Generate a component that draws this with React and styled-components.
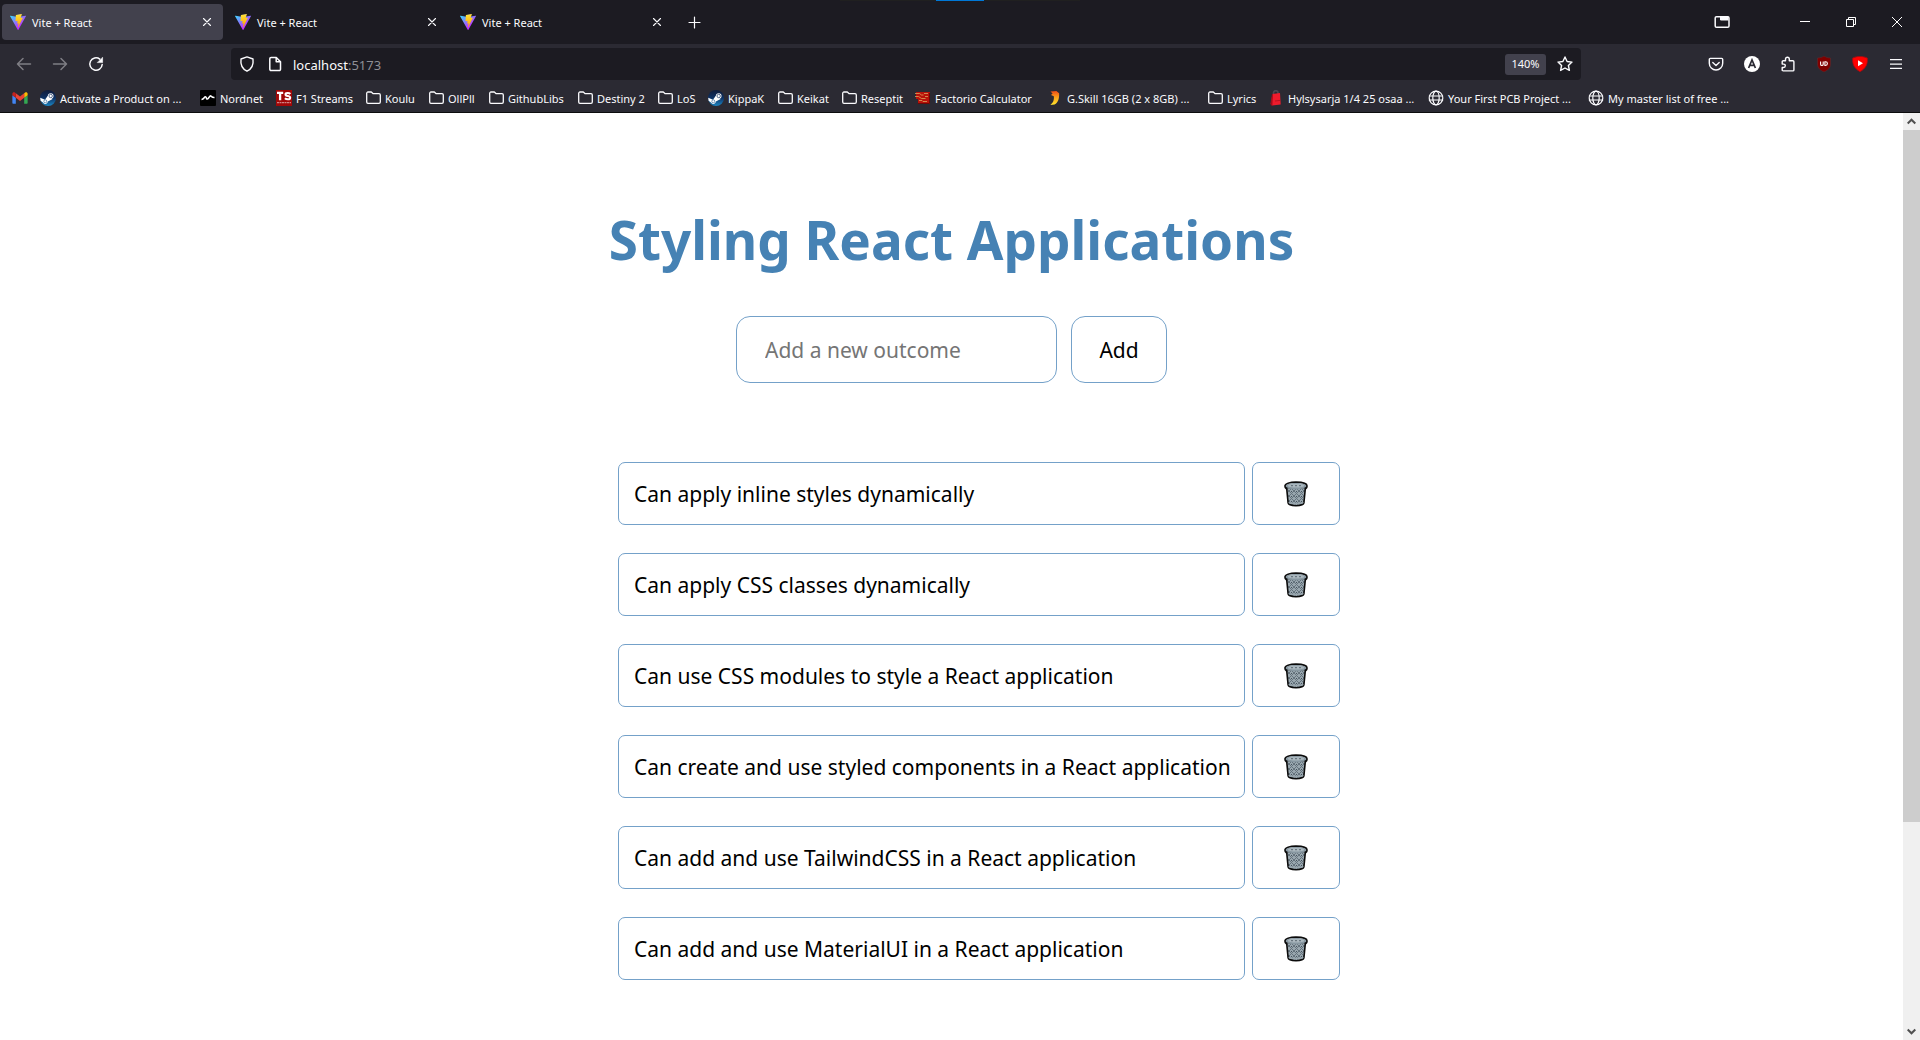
import React, { useState } from "react";
import styled, { createGlobalStyle } from "styled-components";

const GlobalStyle = createGlobalStyle`
  *, *::before, *::after { box-sizing: border-box; }
  body { margin: 0; background: #fff; }
  button, input { font: inherit; color: inherit; margin: 0; }
  svg { display: block; flex: none; }
`;

const Browser = styled.div`
  display: flex;
  flex-direction: column;
  height: 100vh;
  overflow: hidden;
  font-family: "Open Sans", "Noto Sans", sans-serif;
`;

/* ---------- browser chrome ---------- */

const Chrome = styled.header`
  position: relative;
  flex: none;
  background: #2b2a33;
  color: #fbfbfe;
  font-family: "Noto Sans", "Open Sans", sans-serif;
  font-size: 11px;
  line-height: 16px;
  border-bottom: 1px solid #0c0c0d;
`;

const TaskbarEdge = styled.div`
  position: absolute;
  top: 0;
  left: 50%;
  width: 240px;
  height: 1px;
  transform: translateX(-50%);
  display: flex;
  justify-content: center;
  background: #202020;
`;

const TaskbarMark = styled.div`
  width: 48px;
  background: #0078d7;
`;

const TabStrip = styled.div`
  display: flex;
  align-items: center;
  gap: 4px;
  height: 44px;
  padding-left: 2px;
  background: #1c1b22;
`;

const Tab = styled.div`
  display: flex;
  align-items: center;
  width: 221px;
  height: 36px;
  padding: 0 4px 0 8px;
  border-radius: 4px;
  background: ${(p) => (p.$active ? "#42414d" : "transparent")};
`;

const TabTitle = styled.span`
  flex: 1;
  margin-left: 6px;
  padding-top: 2px;
`;

const IconButton = styled.button`
  display: flex;
  align-items: center;
  justify-content: center;
  flex: none;
  width: ${(p) => p.$width || 36}px;
  height: ${(p) => p.$height || 32}px;
  padding: 0;
  border: 0;
  border-radius: 4px;
  background: transparent;
  opacity: ${(p) => (p.disabled ? 0.4 : 1)};
`;

const WindowControls = styled.div`
  display: flex;
  align-items: center;
  margin-left: auto;
`;

const WindowButtons = styled.div`
  display: flex;
  margin-left: 40px;
`;

const NavBar = styled.nav`
  display: flex;
  height: 36px;
  padding: 4px 6px 0;
`;

const AddressBar = styled.div`
  display: flex;
  align-items: center;
  flex: 1;
  height: 32px;
  margin: 0 117px;
  padding: 0 1px 0 2px;
  border-radius: 4px;
  background: #1c1b22;
`;

const Address = styled.div`
  flex: 1;
  margin-left: 4px;
  padding-top: 2px;
  font-size: 13px;
  line-height: 20px;
  outline: none;
`;

const Port = styled.span`
  color: #8f8f96;
`;

const ZoomLevel = styled.button`
  width: 41px;
  height: 21px;
  margin-right: 4px;
  padding: 0;
  border: 0;
  border-radius: 3px;
  background: #42414d;
`;

const Bookmarks = styled.div`
  display: flex;
  height: 32px;
  padding: 4px 0 0 12px;
  align-items: center;
`;

const Bookmark = styled.a`
  display: flex;
  align-items: center;
  gap: 4px;
  flex: none;
  width: ${(p) => p.$width}px;
  color: inherit;
  text-decoration: none;
  white-space: nowrap;
`;

const BookmarkLabel = styled.span`
  padding-top: 2px;
`;

/* ---------- page ---------- */

const Viewport = styled.div`
  display: flex;
  flex: 1;
  min-height: 0;
`;

const Page = styled.main`
  display: flex;
  flex-direction: column;
  align-items: center;
  flex: 1;
  padding-top: 91px;
  background: #fff;
  color: #000;
  font-family: "Noto Sans", "Open Sans", sans-serif;
  font-size: 21px;
  line-height: 30px;
  overflow: hidden;
`;

const Title = styled.h1`
  margin: 0;
  color: #4682b4;
  font-size: 53px;
  line-height: 72px;
  font-weight: 700;
`;

const OutcomeForm = styled.form`
  display: flex;
  gap: 14px;
  margin: 40px 0 79px;
`;

const OutcomeInput = styled.input`
  width: 321px;
  height: 67px;
  padding: 0 28px;
  border: 1px solid #74a1c9;
  border-radius: 14px;
  background: #fff;
  outline: none;

  &::placeholder {
    color: #757575;
    opacity: 1;
  }
`;

const AddButton = styled.button`
  width: 96px;
  height: 67px;
  padding: 0;
  border: 1px solid #74a1c9;
  border-radius: 14px;
  background: #fff;
`;

const OutcomeList = styled.ul`
  display: flex;
  flex-direction: column;
  gap: 28px;
  margin: 0;
  padding: 0 0 0 55px;
  list-style: none;
`;

const OutcomeRow = styled.li`
  display: flex;
  gap: 7px;
`;

const Outcome = styled.div`
  display: flex;
  align-items: center;
  width: 627px;
  height: 63px;
  padding: 0 12px 0 15px;
  border: 1px solid #74a1c9;
  border-radius: 7px;
  white-space: nowrap;
`;

const DeleteButton = styled.button`
  display: flex;
  align-items: center;
  justify-content: center;
  width: 88px;
  height: 63px;
  padding: 0;
  border: 1px solid #74a1c9;
  border-radius: 7px;
  background: #fff;
`;

const Scrollbar = styled.div`
  display: flex;
  flex-direction: column;
  width: 17px;
  background: #f0f0f0;
`;

const ScrollArrow = styled.div`
  display: flex;
  align-items: center;
  justify-content: center;
  height: 17px;
`;

const ScrollThumb = styled.div`
  flex: 31;
  background: #cdcdcd;
`;

const ScrollRest = styled.div`
  flex: 9;
`;

/* ---------- icons ---------- */

const Line = ({ size = 16, width = 1.3, children }) => (
  <svg width={size} height={size} viewBox={`0 0 ${size} ${size}`} fill="none" stroke="#fbfbfe" strokeWidth={width} strokeLinecap="round" strokeLinejoin="round" aria-hidden="true">
    {children}
  </svg>
);

const ViteIcon = ({ id }) => (
  <svg width="16" height="16" viewBox="0 0 256 257" aria-hidden="true">
    <defs>
      <linearGradient id={`${id}a`} x1="-.8%" x2="57.6%" y1="7.7%" y2="78.4%">
        <stop offset="0%" stopColor="#41D1FF" />
        <stop offset="100%" stopColor="#BD34FE" />
      </linearGradient>
      <linearGradient id={`${id}b`} x1="43.4%" x2="50.3%" y1="2.2%" y2="89%">
        <stop offset="0%" stopColor="#FFEA83" />
        <stop offset="8.3%" stopColor="#FFDD35" />
        <stop offset="100%" stopColor="#FFA800" />
      </linearGradient>
    </defs>
    <path fill={`url(#${id}a)`} d="M255.153 37.938 134.897 252.976c-2.483 4.44-8.862 4.466-11.382.048L.875 37.958c-2.746-4.814 1.371-10.646 6.827-9.67l120.385 21.517a6.537 6.537 0 0 0 2.322-.004l117.867-21.483c5.438-.991 9.574 4.796 6.877 9.62Z" />
    <path fill={`url(#${id}b)`} d="M185.432.063 96.44 17.501a3.268 3.268 0 0 0-2.634 3.014l-5.474 92.456a3.268 3.268 0 0 0 3.997 3.378l24.777-5.718c2.318-.535 4.413 1.507 3.936 3.838l-7.361 36.047c-.495 2.426 1.782 4.5 4.151 3.78l15.304-4.649c2.372-.72 4.652 1.36 4.15 3.788l-11.698 56.621c-.732 3.542 3.979 5.473 5.943 2.437l1.313-2.028 72.516-144.72c1.215-2.423-.88-5.186-3.54-4.672l-25.505 4.922c-2.396.462-4.435-1.77-3.759-4.114l16.646-57.705c.677-2.35-1.37-4.583-3.769-4.113Z" />
  </svg>
);

const CloseIcon = () => (
  <Line width={1.1}><path d="M4.5 4.5l7 7M11.500 4.500l-7 7" /></Line>
);
const PlusIcon = () => (
  <Line width={1.2}><path d="M8.500 3v11M3 8.500h11" /></Line>
);
const BackIcon = () => (
  <Line width={1.5}><path d="M14.500 8H1.500M7 2.500L1.500 8 7 13.500" /></Line>
);
const ForwardIcon = () => (
  <Line width={1.5}><path d="M1.500 8h13M9 2.500L14.500 8 9 13.500" /></Line>
);
const ReloadIcon = () => (
  <Line width={1.5}>
    <path d="M14.200 8.500A6.200 6.200 0 1 1 11.800 3.100" />
    <path d="M14.600 1.600v5h-5z" fill="#fbfbfe" strokeWidth="0.6" />
  </Line>
);
const ShieldIcon = () => (
  <Line width={1.4}><path d="M8 .9l6 2.100c.6 4.800-.8 9.700-6 12.200C2.800 12.700 1.400 7.800 2 3z" /></Line>
);
const PageIcon = () => (
  <Line width={1.5}><path d="M4.100 1.500h5.200l4.200 4.200v7.500a1.300 1.300 0 0 1-1.300 1.300H4.100a1.300 1.300 0 0 1-1.300-1.300V2.800a1.300 1.300 0 0 1 1.300-1.300z" /><path d="M9.200 1.800v4h4" /></Line>
);
const StarIcon = () => (
  <Line width={1.4}><path d="M8 1l2.100 4.500 4.900.600-3.600 3.400 1 4.900L8 12l-4.400 2.400 1-4.900L1 6.100l4.900-.600z" /></Line>
);
const FolderIcon = () => (
  <Line width={1.3}><path d="M3 2h3.300l1.900 1.700H14a1.300 1.300 0 0 1 1.300 1.300v7a1.300 1.300 0 0 1-1.300 1.300H3A1.300 1.300 0 0 1 1.700 12V3.300A1.300 1.300 0 0 1 3 2z" /></Line>
);
const GlobeIcon = () => (
  <Line width={1.2}><circle cx="8" cy="8" r="6.800" /><ellipse cx="8" cy="8" rx="3.200" ry="6.800" /><path d="M1.300 6h13.400M1.300 10h13.400" /></Line>
);
const TabsOverviewIcon = () => (
  <svg width="16" height="16" viewBox="0 0 16 16" aria-hidden="true">
    <rect x="1.200" y="2.700" width="13.800" height="10.600" rx="1.300" fill="none" stroke="#fbfbfe" strokeWidth="1.500" />
    <path d="M6 2.500h8.500v4H7.300A1.300 1.300 0 0 1 6 5.200z" fill="#fbfbfe" />
  </svg>
);
const MinimizeIcon = () => (
  <svg width="10" height="10" viewBox="0 0 10 10" aria-hidden="true"><path d="M0 4h10v1H0z" fill="#fff" /></svg>
);
const RestoreIcon = () => (
  <svg width="10" height="10" viewBox="0 0 10 10" fill="none" stroke="#fff" aria-hidden="true"><path d="M.5 2.500h7v7h-7zM2.500 2V.5h7v7H8" /></svg>
);
const WindowCloseIcon = () => (
  <svg width="10" height="10" viewBox="0 0 10 10" fill="none" stroke="#fff" aria-hidden="true"><path d="M0 0l10 10M10 0L0 10" /></svg>
);
const PocketIcon = () => (
  <Line width={1.4}><path d="M2.300 2.400h11.400a1 1 0 0 1 1 1v3.900a6.700 6.700 0 0 1-13.400 0V3.400a1 1 0 0 1 1-1z" /><path d="M4.800 6.400L8 9.400l3.200-3" /></Line>
);
const AccountIcon = () => (
  <svg width="16" height="16" viewBox="0 0 16 16" aria-hidden="true">
    <circle cx="8" cy="8" r="8" fill="#fff" />
    <path d="M4.600 12L8 4l3.400 8M5.900 9.400h4.200" fill="none" stroke="#2b2a33" strokeWidth="1.700" />
  </svg>
);
const PuzzleIcon = () => (
  <Line width={1.400}><path d="M5.500 4.700V3.200a1.900 1.900 0 0 1 3.800 0v1.500h3.600a1 1 0 0 1 1 1v8.200a1 1 0 0 1-1 1H3.200a1 1 0 0 1-1-1v-2.400h1.400a1.700 1.700 0 0 0 0-3.400H2.200V5.700a1 1 0 0 1 1-1z" /></Line>
);
const UblockIcon = () => (
  <svg width="16" height="16" viewBox="0 0 16 16" aria-hidden="true">
    <path d="M8 0c2 1.400 4 1.900 6.500 2v6c0 4-2.700 6.300-6.500 8-3.800-1.700-6.500-4-6.500-8V2C4 1.900 6 1.400 8 0z" fill="#800000" stroke="#5b3035" strokeWidth=".5" />
    <path d="M4.600 5.500v2.700a1.300 1.300 0 0 0 2.600 0V5.500M8.900 5.700h.6a1.900 1.900 0 0 1 0 3.800h-.6z" fill="none" stroke="#fff" strokeWidth="1.100" />
  </svg>
);
const SponsorIcon = () => (
  <svg width="16" height="16" viewBox="0 0 16 16" aria-hidden="true">
    <path d="M8 .4C10.500.4 13 .9 15.300 2c.7 6-1.600 10.600-7.300 13.700C2.300 12.600 0 8 .7 2 3 .9 5.500.4 8 .4z" fill="#f00" stroke="#a30d12" strokeWidth=".8" />
    <path d="M6 4.300l5 3-5 3z" fill="#fff" />
  </svg>
);
const MenuIcon = () => (
  <svg width="16" height="16" viewBox="0 0 16 16" aria-hidden="true"><path d="M2 3h12v1.300H2zM2 7.400h12v1.300H2zM2 11.800h12v1.300H2z" fill="#fbfbfe" /></svg>
);
const GmailIcon = () => (
  <svg width="16" height="16" viewBox="50 32 92 86" aria-hidden="true">
    <path fill="#4285f4" d="M58 108h14V74L52 59v43c0 3.320 2.690 6 6 6" />
    <path fill="#34a853" d="M120 108h14c3.320 0 6-2.690 6-6V59l-20 15" />
    <path fill="#fbbc04" d="M120 48v26l20-15v-8c0-7.420-8.470-11.650-14.400-7.200" />
    <path fill="#ea4335" d="M72 74V48l24 18 24-18v26L96 92" />
    <path fill="#c5221f" d="M52 51v8l20 15V48l-5.600-4.200c-5.940-4.450-14.400-.220-14.400 7.200" />
  </svg>
);
const SteamIcon = ({ id }) => (
  <svg width="16" height="16" viewBox="0 0 16 16" aria-hidden="true">
    <defs>
      <linearGradient id={id} x1="0" x2="0" y1="0" y2="1">
        <stop offset="0" stopColor="#101c3a" />
        <stop offset=".5" stopColor="#0d3164" />
        <stop offset="1" stopColor="#1b86c4" />
      </linearGradient>
    </defs>
    <circle cx="8" cy="8" r="8" fill={`url(#${id})`} />
    <path d="M.2 7.700l4.800 2 3-4.300 4.600 3.500-4.700 2.700a2.600 2.600 0 0 1-4.900 1L.6 10.800z" fill="#fff" />
    <circle cx="10.700" cy="6" r="2.800" fill="#fff" />
    <circle cx="10.700" cy="6" r="1.700" fill="#fff" stroke="#12305f" strokeWidth=".7" />
    <circle cx="5.300" cy="11.300" r="1.500" fill="#fff" stroke="#1a5590" strokeWidth=".6" />
  </svg>
);
const NordnetIcon = () => (
  <svg width="16" height="16" viewBox="0 0 16 16" aria-hidden="true">
    <rect width="16" height="16" rx="1" fill="#000" />
    <path d="M1.500 9.500c1.300 0 2-.8 2.700-1.800.9-1.300 1.700-1.200 2.100 0 .3 1.200.9 2.100 2.100.6 1.100-1.400 1.600-3 2.600-2.200.8.7 1.600 1.700 3.500 1.500" fill="none" stroke="#fff" strokeWidth="1.500" />
  </svg>
);
const StreamsIcon = () => (
  <svg width="16" height="16" viewBox="0 0 16 16" aria-hidden="true">
    <rect width="16" height="16" fill="#a00808" />
    <path d="M1 2.900h6.200M4.100 3v7.200" fill="none" stroke="#fff" strokeWidth="2.300" />
    <path d="M14.300 4c-1-1.200-4.800-1.500-4.800.4 0 2.300 4.700 1 4.700 3.300 0 2.200-4 1.900-5.300.6" fill="none" stroke="#fff" strokeWidth="2" />
    <path d="M1 12.700h14" stroke="#d9a0a0" strokeWidth="1" strokeDasharray="2 .5" />
  </svg>
);
const FactorioIcon = () => (
  <svg width="16" height="16" viewBox="0 0 16 16" aria-hidden="true">
    <path d="M1 2h14v12H3V9H1z" fill="#b8120a" />
    <path d="M3 13.500h11.500V3" fill="none" stroke="#6e0805" />
    <path d="M0 3.500h4.500l2 1.500h2M0 6.500h3.500l3 2h4M4 10.500h3l1 1h4M9 3.500h4M10 6.500h3" fill="none" stroke="#dba45c" strokeWidth=".8" />
  </svg>
);
const SkillIcon = () => (
  <svg width="16" height="16" viewBox="0 0 16 16" aria-hidden="true">
    <defs>
      <linearGradient id="skill" x1="0" x2="0" y1="0" y2="1">
        <stop offset="0" stopColor="#f04a17" />
        <stop offset=".45" stopColor="#f9a01b" />
        <stop offset="1" stopColor="#ffe52c" />
      </linearGradient>
    </defs>
    <path d="M3.500 1.600L9.400.900l2.700 2.300c.3 5.300-1 9.500-4.500 11.300L3.300 15c2.500-2 4.100-4.500 3.500-8.700L4 5l1.600-1.500z" fill="url(#skill)" />
  </svg>
);
const BagIcon = () => (
  <svg width="16" height="16" viewBox="0 0 16 16" aria-hidden="true">
    <path d="M5.500 4.500V3a2.300 2.300 0 0 1 4.600 0v1.500" fill="none" stroke="#4a4953" strokeWidth="1.600" />
    <path d="M4.500 4L12 3l.7 11.500-8.700 1L2.700 14z" fill="#ee1b2c" />
    <path d="M4.500 4L4 15.500 2.700 14zM7 11l5-.600" fill="#a50d1b" stroke="#a50d1b" strokeWidth=".7" />
  </svg>
);

const TrashIcon = () => (
  <svg width="24" height="26" viewBox="0 0 24 26" aria-hidden="true">
    <defs>
      <pattern id="mesh" width="5" height="5" patternUnits="userSpaceOnUse">
        <rect width="5" height="5" fill="#98a6ae" />
        <path d="M0 0l5 5M5 0L0 5" stroke="#65737d" strokeWidth="1" />
        <rect x="2" y="0" width="1" height="1" fill="#46535d" />
      </pattern>
    </defs>
    <path d="M2.600 6.500l1.500 15.400c.2 1.500 3.800 2.800 7.900 2.800s7.700-1.300 7.900-2.800L21.400 6.500z" fill="url(#mesh)" stroke="#0b0b0b" strokeWidth="1.600" />
    <path d="M5 21.300c1.300 1.800 12.700 1.800 14 0" fill="none" stroke="#98a6ae" strokeWidth="1.600" />
    <path d="M1 5C1 2.800 5.800 1.200 12 1.200S23 2.800 23 5c0 1.400-.4 2.300-1.400 2.800" fill="none" stroke="#0b0b0b" strokeWidth="1.700" />
    <path d="M1 5c0 1.400.4 2.300 1.400 2.800" fill="none" stroke="#0b0b0b" strokeWidth="1.700" />
    <path d="M1.800 5C1.800 3.200 6.200 2 12 2s10.200 1.200 10.200 3-4.400 3.300-10.200 3.300S1.800 6.800 1.800 5z" fill="#8797a1" />
    <ellipse cx="12" cy="4.700" rx="8.200" ry="1.900" fill="#aab7be" />
    <path d="M7 4.700h11" stroke="#596770" strokeWidth="1" strokeDasharray="2 2" />
  </svg>
);

const Chevron = ({ up }) => (
  <svg width="9" height="7" viewBox="0 0 9 7" fill="none" stroke="#505050" strokeWidth="2" aria-hidden="true">
    <path d={up ? "M.7 5.500L4.500 1.700l3.800 3.800" : "M.7 1.500l3.800 3.800 3.800-3.800"} />
  </svg>
);

/* ---------- data ---------- */

const tabs = ["first", "second", "third"];

const bookmarks = [
  { icon: <GmailIcon />, label: "", width: 28 },
  { icon: <SteamIcon id="steam1" />, label: "Activate a Product on ...", width: 160 },
  { icon: <NordnetIcon />, label: "Nordnet", width: 76 },
  { icon: <StreamsIcon />, label: "F1 Streams", width: 89 },
  { icon: <FolderIcon />, label: "Koulu", width: 63 },
  { icon: <FolderIcon />, label: "OllPll", width: 60 },
  { icon: <FolderIcon />, label: "GithubLibs", width: 89 },
  { icon: <FolderIcon />, label: "Destiny 2", width: 80 },
  { icon: <FolderIcon />, label: "LoS", width: 51 },
  { icon: <SteamIcon id="steam2" />, label: "KippaK", width: 69 },
  { icon: <FolderIcon />, label: "Keikat", width: 64 },
  { icon: <FolderIcon />, label: "Reseptit", width: 74 },
  { icon: <FactorioIcon />, label: "Factorio Calculator", width: 132 },
  { icon: <SkillIcon />, label: "G.Skill 16GB (2 x 8GB) ...", width: 160 },
  { icon: <FolderIcon />, label: "Lyrics", width: 61 },
  { icon: <BagIcon />, label: "Hylsysarja 1/4 25 osaa ...", width: 160 },
  { icon: <GlobeIcon />, label: "Your First PCB Project ...", width: 160 },
  { icon: <GlobeIcon />, label: "My master list of free ...", width: 160 },
];

const initialOutcomes = [
  "Can apply inline styles dynamically",
  "Can apply CSS classes dynamically",
  "Can use CSS modules to style a React application",
  "Can create and use styled components in a React application",
  "Can add and use TailwindCSS in a React application",
  "Can add and use MaterialUI in a React application",
];

function BrowserChrome() {
  return (
    <Chrome>
      <TabStrip>
        {tabs.map((tab, i) => (
          <Tab key={tab} $active={i === 0}>
            <ViteIcon id={tab} />
            <TabTitle>Vite + React</TabTitle>
            <IconButton $width={24} $height={24} aria-label="Close tab"><CloseIcon /></IconButton>
          </Tab>
        ))}
        <IconButton $width={34} aria-label="New tab"><PlusIcon /></IconButton>
        <WindowControls>
          <IconButton $width={40} aria-label="List all tabs"><TabsOverviewIcon /></IconButton>
          <WindowButtons>
            <IconButton $width={46} aria-label="Minimize"><MinimizeIcon /></IconButton>
            <IconButton $width={46} aria-label="Restore"><RestoreIcon /></IconButton>
            <IconButton $width={46} aria-label="Close"><WindowCloseIcon /></IconButton>
          </WindowButtons>
        </WindowControls>
      </TabStrip>
      <NavBar>
        <IconButton disabled aria-label="Back"><BackIcon /></IconButton>
        <IconButton disabled aria-label="Forward"><ForwardIcon /></IconButton>
        <IconButton aria-label="Reload"><ReloadIcon /></IconButton>
        <AddressBar>
          <IconButton $width={28} aria-label="Tracking protection"><ShieldIcon /></IconButton>
          <IconButton $width={28} aria-label="Site information"><PageIcon /></IconButton>
          <Address role="textbox" aria-label="Address" contentEditable suppressContentEditableWarning spellCheck={false}>
            localhost<Port>:5173</Port>
          </Address>
          <ZoomLevel>140%</ZoomLevel>
          <IconButton $width={30} aria-label="Bookmark this page"><StarIcon /></IconButton>
        </AddressBar>
        <IconButton aria-label="Save to Pocket"><PocketIcon /></IconButton>
        <IconButton aria-label="Account"><AccountIcon /></IconButton>
        <IconButton aria-label="Extensions"><PuzzleIcon /></IconButton>
        <IconButton aria-label="Ad blocker"><UblockIcon /></IconButton>
        <IconButton aria-label="Sponsor skipper"><SponsorIcon /></IconButton>
        <IconButton aria-label="Menu"><MenuIcon /></IconButton>
      </NavBar>
      <Bookmarks>
        {bookmarks.map(({ icon, label, width }) => (
          <Bookmark key={label} href="#" $width={width} aria-label={label || "Gmail"}>
            {icon}
            {label && <BookmarkLabel>{label}</BookmarkLabel>}
          </Bookmark>
        ))}
      </Bookmarks>
      <TaskbarEdge><TaskbarMark /></TaskbarEdge>
    </Chrome>
  );
}

export default function App() {
  const [outcomes, setOutcomes] = useState(initialOutcomes);
  const [draft, setDraft] = useState("");

  const addOutcome = (event) => {
    event.preventDefault();
    if (!draft.trim()) return;
    setOutcomes([...outcomes, draft.trim()]);
    setDraft("");
  };

  return (
    <Browser>
      <GlobalStyle />
      <BrowserChrome />
      <Viewport>
        <Page>
          <Title>Styling React Applications</Title>
          <OutcomeForm onSubmit={addOutcome}>
            <OutcomeInput
              aria-label="New outcome"
              placeholder="Add a new outcome"
              value={draft}
              onChange={(event) => setDraft(event.target.value)}
            />
            <AddButton type="submit">Add</AddButton>
          </OutcomeForm>
          <OutcomeList>
            {outcomes.map((outcome, index) => (
              <OutcomeRow key={outcome}>
                <Outcome>{outcome}</Outcome>
                <DeleteButton
                  aria-label={`Delete: ${outcome}`}
                  onClick={() => setOutcomes(outcomes.filter((_, i) => i !== index))}
                >
                  <TrashIcon />
                </DeleteButton>
              </OutcomeRow>
            ))}
          </OutcomeList>
        </Page>
        <Scrollbar aria-hidden="true">
          <ScrollArrow><Chevron up /></ScrollArrow>
          <ScrollThumb />
          <ScrollRest />
          <ScrollArrow><Chevron /></ScrollArrow>
        </Scrollbar>
      </Viewport>
    </Browser>
  );
}
